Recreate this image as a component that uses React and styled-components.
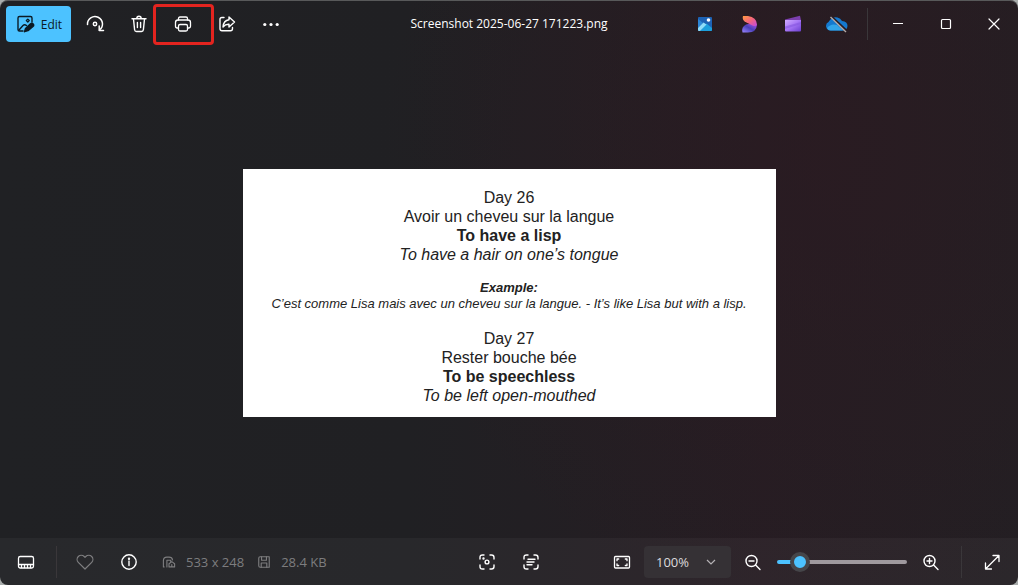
import React, { useState } from 'react';
import styled, { createGlobalStyle, css } from 'styled-components';

const GlobalStyle = createGlobalStyle`
  * {
    box-sizing: border-box;
  }
  body {
    margin: 0;
    background: #a9adac;
    font-family: 'Open Sans', 'Noto Sans', sans-serif;
  }
  button, select, input {
    font-family: inherit;
  }
`;

const Window = styled.div`
  display: flex;
  flex-direction: column;
  min-height: 100vh;
  overflow: hidden;
  border-radius: 8px;
  box-shadow: inset 0 1px 0 #58595a;
  background:
    radial-gradient(ellipse 45% 80% at 82% 26%, rgba(44, 26, 33, 0.6), rgba(44, 26, 33, 0) 100%),
    linear-gradient(90deg, #202124 0%, #202023 40%, #261d23 75%, #231f23 100%);
  color: #ffffff;
`;

const Bar = styled.div`
  display: grid;
  grid-template-columns: 1fr auto 1fr;
  align-items: center;
`;

const TitleBar = styled(Bar).attrs({ as: 'header' })`
  height: 48px;
`;

const StatusBar = styled(Bar).attrs({ as: 'footer' })`
  height: 47px;
  padding: 0 6px;
  background: rgba(255, 255, 255, 0.04);
`;

const Group = styled.div`
  display: flex;
  align-items: center;
  gap: ${(p) => p.$gap || 0}px;
  justify-content: ${(p) => (p.$end ? 'flex-end' : 'flex-start')};
`;

const Tools = styled(Group)`
  padding-left: 6px;
`;

const Title = styled.h1`
  margin: 0;
  font-size: 12px;
  font-weight: 400;
  line-height: 16px;
`;

const buttonReset = css`
  display: flex;
  align-items: center;
  justify-content: center;
  padding: 0;
  border: 0;
  border-radius: 4px;
  background: transparent;
  color: inherit;
`;

const EditButton = styled.button`
  ${buttonReset}
  gap: 6px;
  width: 65px;
  height: 36px;
  background: #4cc2ff;
  color: #0b1a24;
  font-size: 12px;
`;

const IconButton = styled.button`
  ${buttonReset}
  position: relative;
  width: 40px;
  height: 36px;
  color: ${(p) => (p.$dim ? '#7d7d7f' : '#ffffff')};
`;

const CaptionButton = styled(IconButton)`
  width: 48px;
`;

const Highlight = styled.span`
  position: absolute;
  inset: -2px -11px -3px -10px;
  border: 3px solid #e3241f;
  border-radius: 4px;
  pointer-events: none;
`;

const Divider = styled.span`
  width: 1px;
  height: 32px;
  margin: 0 ${(p) => p.$after}px 0 10px;
  background: #3a373a;
`;

const Stage = styled.main`
  flex: 1;
  display: flex;
  align-items: center;
  justify-content: center;
`;

const Picture = styled.article`
  width: 533px;
  padding: 19px 0 12px;
  background: #ffffff;
  color: #222222;
  font-family: 'Liberation Sans', Arial, sans-serif;
  font-size: 16px;
  line-height: 19px;
  text-align: center;
`;

const Line = styled.p`
  margin: 0;
  font-weight: ${(p) => (p.$bold ? 700 : 400)};
  font-style: ${(p) => (p.$italic ? 'italic' : 'normal')};
`;

const Example = styled.div`
  padding: 16px 0 17px;
  font-size: 13px;
  line-height: 16px;
`;

const Info = styled.span`
  display: flex;
  align-items: center;
  gap: 10px;
  margin-left: 13px;
  color: #7d7d7f;
  font-size: 13px;
`;

const ZoomField = styled.label`
  position: relative;
  display: flex;
  align-items: center;
  margin: 0 2px;
  color: #b5b2b5;
`;

const ZoomSelect = styled.select`
  appearance: none;
  width: 87px;
  height: 32px;
  padding: 0 12px;
  border: 0;
  border-radius: 4px;
  background: #353135;
  color: #dddbdd;
  font-size: 13px;
`;

const Chevron = styled.svg`
  position: absolute;
  right: 14px;
  pointer-events: none;
`;

const thumb = css`
  width: 20px;
  height: 20px;
  border: 4px solid #454549;
  border-radius: 50%;
  background: #4cc2ff;
`;

const ZoomSlider = styled.input`
  appearance: none;
  width: 130px;
  height: 20px;
  margin: 0 4px;
  background: transparent;

  &::-webkit-slider-runnable-track {
    height: 4px;
    border-radius: 2px;
    background: linear-gradient(90deg, #4cc2ff ${(p) => p.value}%, #9f999e ${(p) => p.value}%);
  }
  &::-webkit-slider-thumb {
    appearance: none;
    margin-top: -8px;
    ${thumb}
  }
  &::-moz-range-thumb {
    ${thumb}
  }
`;

function Icon({ size = 20, width = 1.2, children }) {
  return (
    <svg
      width={size}
      height={size}
      viewBox="0 0 20 20"
      fill="none"
      stroke="currentColor"
      strokeWidth={width}
      strokeLinecap="round"
      strokeLinejoin="round"
      aria-hidden="true"
    >
      {children}
    </svg>
  );
}

const EditIcon = () => (
  <Icon width={1.4}>
    <path d="M17 8V4Q17 2.500 15.500 2.500H4.500Q3 2.500 3 4V15.500Q3 17 4.500 17H8" />
    <path d="M4 16L8 11.500Q9.500 10 11.500 11.500" />
    <path d="M12.800 5.200L14.200 6.600L12.800 8L11.400 6.600Z" />
    <path d="M9.500 17.700L10.500 14.500L15.500 9.800Q17 8.800 18.200 10Q19.300 11.300 18 12.500L13 16.700Z" fill="currentColor" />
  </Icon>
);

const RotateIcon = () => (
  <Icon width={1.5}>
    <path d="M2.500 10.500A7.500 7.500 0 1 1 14.500 16" />
    <path d="M14.200 12V16.500H18.500" />
    <circle cx="10" cy="10" r="1.700" />
  </Icon>
);

const TrashIcon = () => (
  <Icon width={1.4}>
    <path d="M3 4.700H17M7.800 4.500A2.200 2.200 0 0 1 12.200 4.500M4.500 5L5.600 15.700Q5.800 17.500 7.500 17.500H12.500Q14.200 17.500 14.400 15.700L15.500 5M8.400 8.500V13.500M11.600 8.500V13.500" />
  </Icon>
);

const PrintIcon = () => (
  <Icon width={1.3}>
    <path d="M5.500 6V4.500Q5.500 3 7 3H13Q14.500 3 14.500 4.500V6" />
    <path d="M5.500 14H4.200Q2.500 14 2.500 12.300V8.500Q2.500 6 5 6H15Q17.500 6 17.500 8.500V12.300Q17.500 14 15.800 14H14.500" />
    <rect x="5.500" y="10.500" width="9" height="6.500" rx="1.500" />
  </Icon>
);

const ShareIcon = () => (
  <Icon width={1.4}>
    <path d="M7 3.500H5Q3 3.500 3 5.500V14.500Q3 16.800 5 16.800H13.500Q15.500 16.800 15.500 14.500V13.500" />
    <path d="M12 3L17.500 8L12 13V10.300Q8.500 10 6 13Q6.500 6.500 12 5.800Z" />
  </Icon>
);

const MoreIcon = () => (
  <Icon>
    <g fill="currentColor" stroke="none">
      <circle cx="3.800" cy="10.500" r="1.600" />
      <circle cx="10" cy="10.500" r="1.600" />
      <circle cx="16.200" cy="10.500" r="1.600" />
    </g>
  </Icon>
);

const DesignerIcon = () => (
  <svg width="16" height="16" viewBox="0 0 16 16" aria-hidden="true">
    <rect x="1" y="1" width="14" height="14" rx="1" fill="#1d62b4" />
    <path d="M1 3L6 7L1 12Z" fill="#2c86d6" />
    <path d="M3 15L9.500 7.500L15 12V14Q15 15 14 15Z" fill="#1c9fdc" />
    <path d="M1 12L6.500 6.500L9.500 8.500L3 15H2Q1 15 1 14Z" fill="#8edcf8" />
    <circle cx="11.500" cy="4" r="1.800" fill="#ffffff" />
  </svg>
);

const ClipchampIcon = () => (
  <svg width="18" height="18" viewBox="0 0 18 18" aria-hidden="true">
    <defs>
      <linearGradient id="petal" x1="0" y1="0" x2="1" y2="1">
        <stop offset="0" stopColor="#ff9d3f" />
        <stop offset="0.500" stopColor="#f5647e" />
        <stop offset="1" stopColor="#c04be0" />
      </linearGradient>
      <linearGradient id="leaf" x1="0" y1="1" x2="1" y2="0">
        <stop offset="0" stopColor="#9a86ff" />
        <stop offset="0.500" stopColor="#4a3fb8" />
        <stop offset="1" stopColor="#b653e8" />
      </linearGradient>
    </defs>
    <path d="M2.500 17.500Q1 12 6 9.500Q11 8 17 9.500Q16.500 17.500 8 17.500Z" fill="url(#leaf)" />
    <path d="M3 1H8Q16.500 2 17 9.500Q16 12 12.500 10.500L6.500 7.500Q1.500 5 3 1Z" fill="url(#petal)" />
  </svg>
);

const VideoIcon = () => (
  <svg width="18" height="18" viewBox="0 0 18 18" aria-hidden="true">
    <defs>
      <linearGradient id="clap" x1="0" y1="0" x2="1" y2="1">
        <stop offset="0" stopColor="#d0acff" />
        <stop offset="0.500" stopColor="#a574f5" />
        <stop offset="1" stopColor="#6b3fd0" />
      </linearGradient>
    </defs>
    <path d="M1 4.500L16 0.800L17 5.500H1Z" fill="#7b3fae" />
    <path d="M1 5H17V15.500Q17 16.500 16 16.500H2Q1 16.500 1 15.500Z" fill="url(#clap)" />
    <path d="M1 11.500L17 7V9L1 14Z" fill="#8656e0" opacity="0.600" />
  </svg>
);

const CloudOffIcon = () => (
  <svg width="22" height="18" viewBox="0 0 22 18" aria-hidden="true">
    <path d="M4.500 15.500A4.500 4.500 0 0 1 2.500 7Q6 1 11.500 2.500Q14.500 3 16 6Q21.500 6.500 21.500 11Q21 15.500 17 15.500Z" fill="#1479cf" />
    <path d="M1 13Q5 8 11 10L17 15.500H4.500Q2 15.500 1 13Z" fill="#32a5ea" />
    <path d="M6 2L21 16" stroke="#261b21" strokeWidth="2" />
    <path d="M4.500 2L20 17" stroke="#b5aaa7" strokeWidth="1.400" />
  </svg>
);

const MinimizeIcon = () => (
  <Icon>
    <path d="M5 9.500H15" strokeLinecap="butt" />
  </Icon>
);

const MaximizeIcon = () => (
  <Icon>
    <rect x="5.500" y="5.500" width="9" height="9" rx="1" />
  </Icon>
);

const CloseIcon = () => (
  <Icon>
    <path d="M5 5L15 15M15 5L5 15" />
  </Icon>
);

const FilmstripIcon = () => (
  <Icon width={1.3}>
    <rect x="2.500" y="4.500" width="15" height="11.500" rx="1.800" />
    <path d="M2.500 12.500H17.500M5.500 13V15.500M8.500 13V15.500M11.500 13V15.500M14.500 13V15.500" />
  </Icon>
);

const HeartIcon = () => (
  <Icon>
    <path d="M10 17L3.300 10.300A4.150 4.150 0 0 1 3.300 4.500A4.100 4.100 0 0 1 9.200 4.500L10 5.300L10.800 4.500A4.100 4.100 0 0 1 16.700 4.500A4.150 4.150 0 0 1 16.700 10.300Z" />
  </Icon>
);

const InfoIcon = () => (
  <Icon width={1.4}>
    <circle cx="10" cy="10" r="7.200" />
    <path d="M10 9V13.500" />
    <circle cx="10" cy="6.700" r="0.500" fill="currentColor" />
  </Icon>
);

const DimensionsIcon = () => (
  <Icon size={14} width={1.600}>
    <path d="M3 17H2V8Q2 3 7 3H10Q14.500 3 15 7M7 17V7.500H12.500V10" />
    <path d="M10 17V12.500L14 9.500L18 12.500V17ZM14 17V13.500" />
  </Icon>
);

const DiskIcon = () => (
  <Icon size={14} width={1.600}>
    <path d="M2.500 4.500Q2.500 2.500 4.500 2.500H17.500V17.500H4.500Q2.500 17.500 2.500 15.500Z" />
    <path d="M6.500 2.500V7.500H13.500V2.500M6 17.500V11.500H14V17.500" />
  </Icon>
);

const corners = 'M3 7V5.500Q3 3 5.500 3H7M13 3H14.500Q17 3 17 5.500V7M17 13V14.500Q17 17 14.500 17H13M7 17H5.500Q3 17 3 14.500V13';

const VisualSearchIcon = () => (
  <Icon width={1.400}>
    <path d={corners} />
    <circle cx="10" cy="10" r="1.900" />
    <circle cx="6.500" cy="6.500" r="0.500" fill="currentColor" />
  </Icon>
);

const ScanTextIcon = () => (
  <Icon width={1.400}>
    <path d={corners} />
    <path d="M7 7.200H14M6 10H13M6 12.800H11" />
  </Icon>
);

const FitIcon = () => (
  <Icon width={1.300}>
    <rect x="2.500" y="4.500" width="15" height="11.500" rx="1" />
    <path d="M5 8.700V7H6.700M13.300 7H15V8.700M15 11.800V13.500H13.300M6.700 13.500H5V11.800" />
  </Icon>
);

const ZoomOutIcon = () => (
  <Icon width={1.400}>
    <circle cx="8.500" cy="9" r="5.500" />
    <path d="M12.600 13L17 17.400M6 9H11" />
  </Icon>
);

const ZoomInIcon = () => (
  <Icon width={1.400}>
    <circle cx="8.500" cy="9" r="5.500" />
    <path d="M12.600 13L17 17.400M6 9H11M8.500 6.500V11.500" />
  </Icon>
);

const FullscreenIcon = () => (
  <Icon width={1.300}>
    <path d="M3.500 17L17 3.500M11 3.500H17V9.500M3.500 11V17H9.500" />
  </Icon>
);

const captionButtons = [
  { label: 'Minimize', icon: <MinimizeIcon /> },
  { label: 'Maximize', icon: <MaximizeIcon /> },
  { label: 'Close', icon: <CloseIcon /> },
];

const appButtons = [
  { label: 'Designer', icon: <DesignerIcon /> },
  { label: 'Create with Clipchamp', icon: <ClipchampIcon /> },
  { label: 'Create a video', icon: <VideoIcon /> },
  { label: 'OneDrive is off', icon: <CloudOffIcon /> },
];

export default function App() {
  const [position, setPosition] = useState(12);

  return (
    <>
      <GlobalStyle />
      <Window>
        <TitleBar>
          <Tools $gap={4}>
            <EditButton type="button">
              <EditIcon />
              Edit
            </EditButton>
            <IconButton type="button" aria-label="Rotate"><RotateIcon /></IconButton>
            <IconButton type="button" aria-label="Delete"><TrashIcon /></IconButton>
            <IconButton type="button" aria-label="Print">
              <PrintIcon />
              <Highlight />
            </IconButton>
            <IconButton type="button" aria-label="Share"><ShareIcon /></IconButton>
            <IconButton type="button" aria-label="See more"><MoreIcon /></IconButton>
          </Tools>
          <Title>Screenshot 2025-06-27 171223.png</Title>
          <Group $end>
            <Group $gap={4}>
              {appButtons.map((b) => (
                <IconButton key={b.label} type="button" aria-label={b.label}>{b.icon}</IconButton>
              ))}
            </Group>
            <Divider $after={6} />
            {captionButtons.map((b) => (
              <CaptionButton key={b.label} type="button" aria-label={b.label}>{b.icon}</CaptionButton>
            ))}
          </Group>
        </TitleBar>

        <Stage>
          <Picture>
            <Line>Day 26</Line>
            <Line>Avoir un cheveu sur la langue</Line>
            <Line $bold>To have a lisp</Line>
            <Line $italic>To have a hair on one’s tongue</Line>
            <Example>
              <Line $bold $italic>Example:</Line>
              <Line $italic>C’est comme Lisa mais avec un cheveu sur la langue. - It’s like Lisa but with a lisp.</Line>
            </Example>
            <Line>Day 27</Line>
            <Line>Rester bouche bée</Line>
            <Line $bold>To be speechless</Line>
            <Line $italic>To be left open-mouthed</Line>
          </Picture>
        </Stage>

        <StatusBar>
          <Group>
            <IconButton type="button" aria-label="Filmstrip"><FilmstripIcon /></IconButton>
            <Divider $after={8} />
            <Group $gap={4}>
              <IconButton type="button" aria-label="Favorite" $dim><HeartIcon /></IconButton>
              <IconButton type="button" aria-label="File info"><InfoIcon /></IconButton>
            </Group>
            <Info><DimensionsIcon />533 x 248</Info>
            <Info><DiskIcon />28.4 KB</Info>
          </Group>
          <Group $gap={4}>
            <IconButton type="button" aria-label="Visual search"><VisualSearchIcon /></IconButton>
            <IconButton type="button" aria-label="Scan text"><ScanTextIcon /></IconButton>
          </Group>
          <Group $end>
            <IconButton type="button" aria-label="Zoom to fit"><FitIcon /></IconButton>
            <ZoomField>
              <ZoomSelect aria-label="Zoom level" defaultValue="100%">
                <option>50%</option>
                <option>100%</option>
                <option>200%</option>
              </ZoomSelect>
              <Chevron width="12" height="12" viewBox="0 0 12 12" fill="none" stroke="currentColor" strokeWidth="1.200">
                <path d="M2 4L6 8L10 4" />
              </Chevron>
            </ZoomField>
            <IconButton type="button" aria-label="Zoom out"><ZoomOutIcon /></IconButton>
            <ZoomSlider
              type="range"
              aria-label="Zoom"
              value={position}
              onChange={(e) => setPosition(Number(e.target.value))}
            />
            <IconButton type="button" aria-label="Zoom in"><ZoomInIcon /></IconButton>
            <Divider $after={10} />
            <IconButton type="button" aria-label="Full screen"><FullscreenIcon /></IconButton>
          </Group>
        </StatusBar>
      </Window>
    </>
  );
}
